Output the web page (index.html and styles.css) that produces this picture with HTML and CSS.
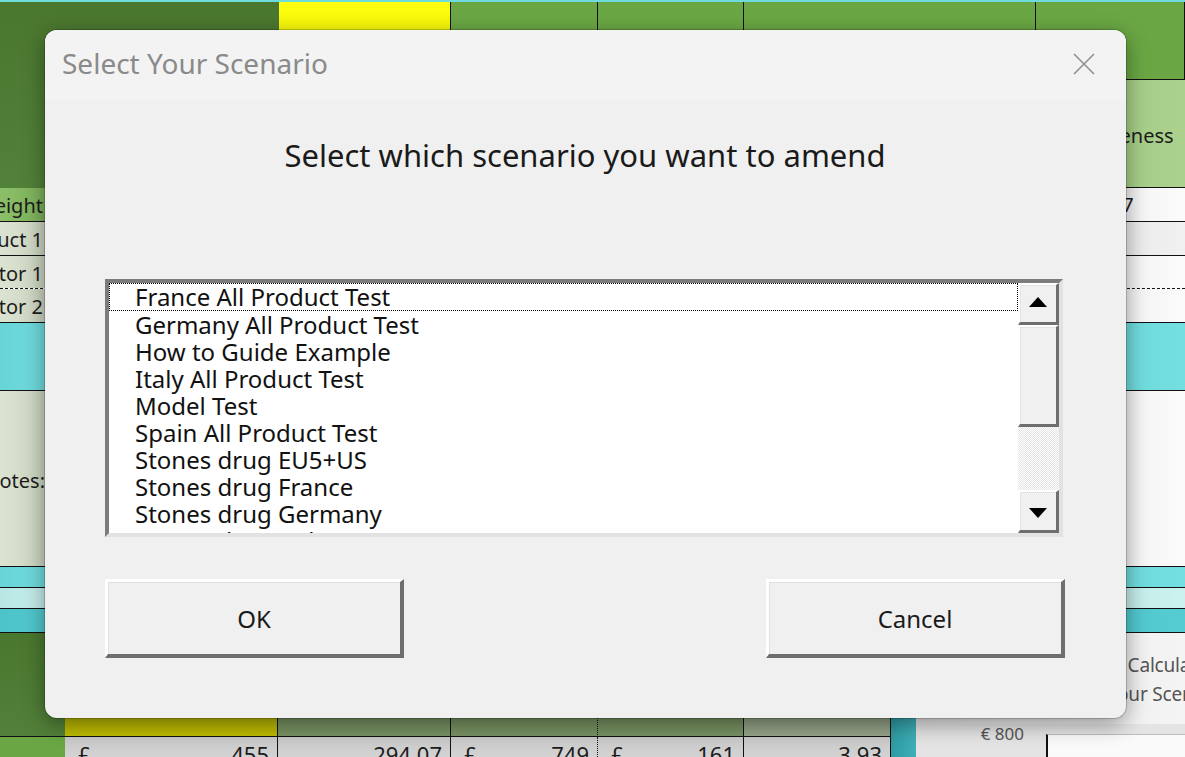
FILE: index.html
```html
<!DOCTYPE html>
<html lang="en">
<head>
  <meta charset="UTF-8">
  <meta name="viewport" content="width=device-width, initial-scale=1.0">
  <title>Select Your Scenario</title>
  <link rel="stylesheet" href="styles.css">
</head>
<body>
  <!-- Worksheet behind the form -->
  <div class="sheet">
    <div class="strip"></div>

    <div class="head">
      <div class="cell dark span2"></div>
      <div class="cell yellow edge"></div>
      <div class="cell green edge"></div>
      <div class="cell green edge"></div>
      <div class="cell green edge"></div>
      <div class="cell green edge"></div>
      <div class="cell blank"></div>
      <div class="cell lightgreen"><span class="shift">Awareness</span></div>
    </div>

    <div class="row">
      <div class="cell label mid"><span>Weight</span></div>
      <div class="cell blank"></div>
      <div class="cell plain"><span class="shift">0.57</span></div>
    </div>
    <div class="row">
      <div class="cell label pale"><span>Product 1</span></div>
      <div class="cell blank"></div>
      <div class="cell plain grey"></div>
    </div>
    <div class="row dashed">
      <div class="cell label pale"><span>Competitor 1</span></div>
      <div class="cell blank"></div>
      <div class="cell plain"></div>
    </div>
    <div class="row">
      <div class="cell label pale"><span>Competitor 2</span></div>
      <div class="cell blank"></div>
      <div class="cell plain"></div>
    </div>
    <div class="row tall">
      <div class="cell cyan"></div>
      <div class="cell blank"></div>
      <div class="cell cyan"></div>
    </div>
    <div class="row notes">
      <div class="cell label pale notes-label"><span>Notes:</span></div>
      <div class="cell blank"></div>
      <div class="cell plain"></div>
    </div>
    <div class="row thin">
      <div class="cell cyan"></div>
      <div class="cell blank"></div>
      <div class="cell cyan"></div>
    </div>
    <div class="row thin">
      <div class="cell cyan-light"></div>
      <div class="cell blank"></div>
      <div class="cell cyan-light"></div>
    </div>
    <div class="row thin last">
      <div class="cell cyan-deep"></div>
      <div class="cell blank"></div>
      <div class="cell cyan-deep"></div>
    </div>

    <div class="foot">
      <div class="cell dark"></div>
      <div class="cell olive"></div>
      <div class="cell sage edge"></div>
      <div class="cell sage edge-dot"></div>
      <div class="cell sage edge"></div>
      <div class="cell sage-light"></div>
      <div class="cell teal"></div>
      <div class="panel">
        <div class="calc">
          <span>Calculate</span>
          <span>Your Scenario</span>
        </div>
        <div class="chart">
          <div class="axis-label">€ 800</div>
          <div class="plot"></div>
        </div>
      </div>

      <div class="cell green"></div>
      <div class="cell money edge"><span>£</span><span>455</span></div>
      <div class="cell money edge"><span></span><span>294.07</span></div>
      <div class="cell money edge-dot"><span>£</span><span>749</span></div>
      <div class="cell money edge"><span>£</span><span>161</span></div>
      <div class="cell money"><span></span><span>3.93</span></div>
    </div>
  </div>

  <!-- Scenario picker form -->
  <div class="dialog">
    <div class="dialog-title">
      <span>Select Your Scenario</span>
      <svg class="close" width="22" height="22" viewBox="0 0 22 22">
        <path d="M1 1L21 21M21 1L1 21" stroke="#8d8d8d" stroke-width="1.5" fill="none"/>
      </svg>
    </div>

    <div class="dialog-body">
      <h1 class="prompt">Select which scenario you want to amend</h1>

      <div class="listbox">
        <ul class="items">
          <li class="item focused">France All Product Test</li>
          <li class="item">Germany All Product Test</li>
          <li class="item">How to Guide Example</li>
          <li class="item">Italy All Product Test</li>
          <li class="item">Model Test</li>
          <li class="item">Spain All Product Test</li>
          <li class="item">Stones drug EU5+US</li>
          <li class="item">Stones drug France</li>
          <li class="item">Stones drug Germany</li>
          <li class="item">Stones drug Italy</li>
          <li class="item">Stones drug Spain</li>
          <li class="item">Stones drug UK</li>
        </ul>
        <div class="scrollbar">
          <div class="sb-btn">
            <svg width="18" height="10" viewBox="0 0 18 10"><polygon points="9,0 18,10 0,10" fill="#000"/></svg>
          </div>
          <div class="sb-thumb"></div>
          <div class="sb-track"></div>
          <div class="sb-btn down">
            <svg width="18" height="10" viewBox="0 0 18 10"><polygon points="0,0 18,0 9,10" fill="#000"/></svg>
          </div>
        </div>
      </div>

      <div class="actions">
        <button class="btn">OK</button>
        <button class="btn">Cancel</button>
      </div>
    </div>
  </div>
</body>
</html>
```

FILE: styles.css
```css
* {
  box-sizing: border-box;
}

body {
  margin: 0;
  width: 1185px;
  height: 757px;
  overflow: hidden;
  position: relative;
  background: #ffffff;
  font-family: 'Noto Sans', 'Open Sans', sans-serif;
  color: #1c1c1c;
}

/* Worksheet */
.sheet {
  display: flex;
  flex-direction: column;
}

.strip {
  height: 2px;
  background: #6fdcdc;
}

.cell {
  min-width: 0;
  overflow: hidden;
  white-space: nowrap;
}

.edge {
  border-right: 1px solid #111;
}

.edge-dot {
  border-right: 1px dotted #111;
}

.head {
  display: grid;
  grid-template-columns: 279px 172px 147px 146px 292px 149px;
  grid-template-rows: 78px 108px;
}

.head .span2 {
  grid-column: 1;
  grid-row: 1 / span 2;
}

.head .yellow,
.head .green {
  border-bottom: 1px solid #111;
}

.head .blank {
  grid-column: 2 / span 4;
}

.dark {
  background: linear-gradient(180deg, #4a772e, #52813a);
}

.yellow {
  background: linear-gradient(180deg, #ffff10, #e9e900);
}

.green {
  background: #6aa744;
}

.lightgreen {
  background: linear-gradient(90deg, #9fca7f, #abd18d);
  border-bottom: 1px solid #111;
  display: flex;
  align-items: center;
  padding-top: 4px;
  font-size: 20px;
}

.blank {
  background: #f2f2f2;
}

.shift {
  padding-left: 36px;
}

.row {
  display: grid;
  grid-template-columns: 65px 981px 139px;
  height: 34px;
  border-bottom: 1px solid #111;
}

.row.dashed {
  height: 33px;
  border-bottom: 1px dashed #111;
}

.row.tall {
  height: 68px;
}

.row.notes {
  height: 176px;
}

.row.thin {
  height: 21px;
}

.row.last {
  height: 24px;
}

/* Right-aligned labels spill out to the left of the column */
.label {
  display: flex;
  justify-content: flex-end;
  align-items: center;
  font-size: 20px;
  padding-right: 22px;
  padding-top: 2px;
}

.label span {
  flex-shrink: 0;
}

.mid {
  background: linear-gradient(90deg, #8cbf68, #76aa55);
}

.pale {
  background: linear-gradient(90deg, #dce3d2, #c3cdb7);
}

.notes .notes-label {
  padding-right: 20px;
  padding-top: 4px;
}

.plain {
  background: linear-gradient(90deg, #e9e9e9, #fbfbfb);
  font-size: 20px;
  line-height: 33px;
}

.plain .shift {
  padding-left: 48px;
}

.plain.grey {
  background: linear-gradient(90deg, #e2e2e2, #f1f1f1);
}

.cyan {
  background: linear-gradient(90deg, #68d4d8, #74dfe0);
}

.cyan-light {
  background: linear-gradient(90deg, #b8e6e4, #cdf2ef);
}

.cyan-deep {
  background: linear-gradient(90deg, #4cc2c9, #55ccd2);
}

/* Bottom block: totals row and the calculate shape */
.foot {
  display: grid;
  grid-template-columns: 65px 213px 173px 147px 146px 146px 26px 269px;
  grid-template-rows: 104px 30px;
}

.foot > .cell:nth-child(-n+6) {
  border-bottom: 1px solid #111;
}

.olive {
  background: linear-gradient(180deg, #8a8a1c, #c0bd00);
  border-right: 1px solid #111;
}

.sage {
  background: linear-gradient(180deg, #5c7a4c, #7a9464);
}

.sage-light {
  background: linear-gradient(180deg, #667e58, #97a58a);
}

.teal {
  grid-column: 7;
  grid-row: 1 / span 2;
  background: linear-gradient(90deg, #2f9aa2, #3fb0b8);
  border-left: 1px solid #111;
}

.panel {
  grid-column: 8;
  grid-row: 1 / span 2;
  display: flex;
  flex-direction: column;
  background: linear-gradient(90deg, #e6e6e6, #f4f4f4);
}

.calc {
  height: 91px;
  display: flex;
  flex-direction: column;
  align-items: center;
  justify-content: center;
  padding-left: 234px;
  padding-top: 2px;
  font-size: 19px;
  line-height: 29px;
  letter-spacing: -0.2px;
  color: #555;
  white-space: nowrap;
}

.chart {
  flex: 1;
  display: grid;
  grid-template-columns: 130px 139px;
  background: #e4e4e4;
}

.axis-label {
  font-size: 17px;
  color: #555;
  text-align: right;
  padding-right: 22px;
  line-height: 20px;
  padding-top: 0;
}

.plot {
  margin-top: 10px;
  border-left: 2px solid #111;
  border-top: 1px solid #bdbdbd;
  background: #fafafa;
}

.money {
  display: flex;
  justify-content: space-between;
  padding: 4px 8px 0 13px;
  font-size: 22px;
  line-height: 26px;
  background: linear-gradient(180deg, #c9c9c9, #d8d8d8);
}

/* Form */
.dialog {
  position: absolute;
  left: 45px;
  top: 30px;
  width: 1081px;
  height: 688px;
  border-radius: 12px;
  background: #f0f0f0;
  box-shadow: 0 0 0 1px rgba(0, 0, 0, 0.18), 0 6px 22px rgba(0, 0, 0, 0.4);
  overflow: hidden;
}

.dialog-title {
  height: 70px;
  display: flex;
  align-items: center;
  justify-content: space-between;
  padding: 0 31px 4px 17px;
  background: #f3f3f3;
  font-size: 28px;
  color: #8a8a8a;
}

.close {
  margin-bottom: -2px;
}

.dialog-body {
  padding: 0 61px 0 60px;
}

.prompt {
  margin: 35px 0 0;
  font-size: 31px;
  font-weight: normal;
  line-height: 40px;
  text-align: center;
  color: #1a1a1a;
}

.listbox {
  margin: 104px 2px 0 0;
  height: 258px;
  display: flex;
  background: #ffffff;
  border: 4px solid;
  border-color: #7c7c7c #e2e2e2 #e2e2e2 #7c7c7c;
}

.items {
  flex: 1;
  margin: 0;
  padding: 0;
  list-style: none;
  overflow: hidden;
}

.item {
  height: 27px;
  padding-left: 26px;
  font-size: 24px;
  line-height: 27px;
  color: #111;
  white-space: nowrap;
}

.item.focused {
  height: 28px;
  outline: 1px dotted #000;
  outline-offset: -1px;
}

.scrollbar {
  width: 41px;
  display: flex;
  flex-direction: column;
}

.sb-btn,
.sb-thumb {
  background: #f0f0f0;
  border-style: solid;
  border-width: 2px 3px 3px 2px;
  border-color: #ffffff #6e6e6e #6e6e6e #ffffff;
  box-shadow: inset 1px 1px 0 #e3e3e3;
}

.sb-btn {
  height: 42px;
  display: flex;
  align-items: center;
  justify-content: center;
  padding-bottom: 4px;
}

.sb-btn.down {
  height: 43px;
  padding: 4px 0 0;
}

.sb-thumb {
  height: 102px;
}

.sb-track {
  flex: 1;
  background-image: repeating-conic-gradient(#ffffff 0 25%, #e4e4e4 0 50%);
  background-size: 2px 2px;
}

.actions {
  margin-top: 42px;
  display: flex;
  justify-content: space-between;
}

.btn {
  width: 299px;
  height: 79px;
  padding: 0;
  font-family: inherit;
  font-size: 24px;
  color: #1a1a1a;
  background: #f0f0f0;
  border-style: solid;
  border-width: 3px 4px 4px 3px;
  border-color: #ffffff #6e6e6e #6e6e6e #ffffff;
  box-shadow: inset 1px 1px 0 #e0e0e0;
}
```
